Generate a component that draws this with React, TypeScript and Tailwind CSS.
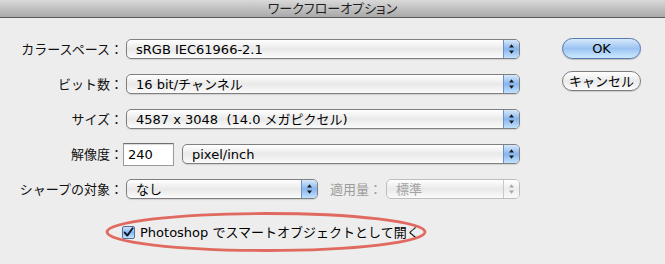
import React from "react";

const font =
  "font-['DejaVu_Sans','Noto_Sans_CJK_JP',sans-serif] text-[13px] leading-none";

function Arrows({ disabled }: { disabled?: boolean }) {
  const fill = disabled ? "#a9a9a9" : "#1a1a1a";
  return (
    <svg width="7" height="12" viewBox="0 0 7 12">
      <path d="M3.5 1.2 L6 4.6 H1 Z" fill={fill} />
      <path d="M3.5 10.8 L6 7.4 H1 Z" fill={fill} />
    </svg>
  );
}

interface PopupProps {
  value: string;
  width: string;
  disabled?: boolean;
}

function Popup({ value, width, disabled }: PopupProps) {
  return (
    <div
      className={`flex h-[20px] ${width} items-stretch overflow-hidden rounded-[5px] border ${
        disabled
          ? "border-[#bdbdbd] text-[#a3a3a3]"
          : "border-[#7f7f7f] text-black shadow-[0_1px_1px_rgba(0,0,0,0.12)]"
      } bg-linear-to-b from-white via-[#e9e9e9] to-[#fbfbfb]`}
    >
      <span className="flex flex-1 items-center truncate whitespace-pre pl-[9px]">{value}</span>
      <div
        className={`flex w-[16px] items-center justify-center border-l ${
          disabled
            ? "border-[#c9c9c9] bg-linear-to-b from-white via-[#ededed] to-[#fafafa]"
            : "border-[#6f8fbf] bg-linear-to-b from-[#d7e8fa] via-[#86b5ee] to-[#c3e2fd]"
        }`}
      >
        <Arrows disabled={disabled} />
      </div>
    </div>
  );
}

function Label({ children }: { children: React.ReactNode }) {
  return <div className="w-[123px] shrink-0 text-right text-[#111]">{children}</div>;
}

export default function App() {
  return (
    <div className={`relative h-[264px] w-[665px] overflow-hidden bg-[#ededed] ${font}`}>
      <div className="flex h-[18px] items-center justify-center border-b border-[#595959] bg-linear-to-b from-[#d9d9d9] to-[#a9a9a9] text-[13px] text-[#1f1f1f] [font-feature-settings:'palt']">
        ワークフローオプション
      </div>

      <div className="flex">
        <div className="flex flex-col gap-[15px] pt-[21px]">
          <div className="flex h-[20px] items-center">
            <Label>カラースペース：</Label>
            <div className="ml-[3px]">
              <Popup value="sRGB IEC61966-2.1" width="w-[394px]" />
            </div>
          </div>
          <div className="flex h-[20px] items-center">
            <Label>ビット数：</Label>
            <div className="ml-[3px]">
              <Popup value="16 bit/チャンネル" width="w-[394px]" />
            </div>
          </div>
          <div className="flex h-[20px] items-center">
            <Label>サイズ：</Label>
            <div className="ml-[3px]">
              <Popup value="4587 x 3048  (14.0 メガピクセル)" width="w-[394px]" />
            </div>
          </div>
          <div className="flex h-[20px] items-center">
            <Label>解像度：</Label>
            <div className="flex h-[23px] w-[51px] shrink-0 items-center border border-[#9a9a9a] border-t-[#6f6f6f] bg-white pl-[4px] shadow-[inset_0_1px_1px_rgba(0,0,0,0.15)]">
              240
            </div>
            <div className="ml-[8px]">
              <Popup value="pixel/inch" width="w-[338px]" />
            </div>
          </div>
          <div className="flex h-[20px] items-center">
            <Label>シャープの対象：</Label>
            <div className="ml-[3px]">
              <Popup value="なし" width="w-[192px]" />
            </div>
            <div className="ml-[12px] text-[#9c9c9c]">適用量：</div>
            <div className="ml-[4px]">
              <Popup value="標準" width="w-[134px]" disabled />
            </div>
          </div>
        </div>

        <div className="ml-[42px] flex flex-col gap-[12px] pt-[20px]">
          <button className="flex h-[21px] w-[79px] items-center justify-center rounded-full border border-[#5579ad] bg-linear-to-b from-[#d8e9fb] via-[#9ac3f1] to-[#cdeafe] text-black shadow-[0_1px_1px_rgba(0,0,0,0.2)]">
            OK
          </button>
          <button className="flex h-[20px] w-[79px] items-center justify-center rounded-full border border-[#7d7d7d] bg-linear-to-b from-white via-[#eaeaea] to-[#fcfcfc] text-black shadow-[0_1px_1px_rgba(0,0,0,0.15)]">
            キャンセル
          </button>
        </div>
      </div>

      <div className="mt-[26px] flex h-[14px] items-center pl-[122px]">
        <div className="flex h-[13px] w-[13px] items-center justify-center rounded-[2px] border border-[#4f6f9f] bg-linear-to-b from-[#cfe3f9] via-[#8ab8ee] to-[#c6e4fd]">
          <svg width="11" height="11" viewBox="0 0 11 11">
            <path
              d="M1.8 5.6 L4.3 8.6 L9.6 1.2"
              fill="none"
              stroke="#0c1a33"
              strokeWidth="1.9"
              strokeLinecap="round"
              strokeLinejoin="round"
            />
          </svg>
        </div>
        <span className="ml-[5px] text-black">Photoshop でスマートオブジェクトとして開く</span>
      </div>

      <svg
        className="pointer-events-none absolute left-0 top-0"
        width="665"
        height="264"
        viewBox="0 0 665 264"
      >
        <ellipse
          cx="266"
          cy="232"
          rx="159"
          ry="18.5"
          fill="none"
          stroke="#df5b50"
          strokeWidth="2.8"
          opacity="0.9"
        />
      </svg>
    </div>
  );
}
